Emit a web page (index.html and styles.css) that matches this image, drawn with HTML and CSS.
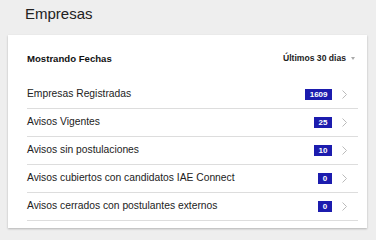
FILE: index.html
```html
<!DOCTYPE html>
<html lang="es">
<head>
<meta charset="utf-8">
<title>Empresas</title>
<link rel="stylesheet" href="styles.css">
</head>
<body>
  <h1 class="page-title">Empresas</h1>
  <section class="card">
    <header class="card-header">
      <span class="card-heading">Mostrando Fechas</span>
      <span class="range">Últimos 30 dias<span class="caret"></span></span>
    </header>
    <ul class="stats">
      <li class="stat">
        <span class="stat-label">Empresas Registradas</span>
        <span class="stat-end"><span class="badge">1609</span><svg class="chev" viewBox="0 0 5 9" width="5" height="9"><polyline points="0.5,0.5 4.5,4.5 0.5,8.5"/></svg></span>
      </li>
      <li class="stat">
        <span class="stat-label">Avisos Vigentes</span>
        <span class="stat-end"><span class="badge">25</span><svg class="chev" viewBox="0 0 5 9" width="5" height="9"><polyline points="0.5,0.5 4.5,4.5 0.5,8.5"/></svg></span>
      </li>
      <li class="stat">
        <span class="stat-label">Avisos sin postulaciones</span>
        <span class="stat-end"><span class="badge">10</span><svg class="chev" viewBox="0 0 5 9" width="5" height="9"><polyline points="0.5,0.5 4.5,4.5 0.5,8.5"/></svg></span>
      </li>
      <li class="stat">
        <span class="stat-label">Avisos cubiertos con candidatos IAE Connect</span>
        <span class="stat-end"><span class="badge">0</span><svg class="chev" viewBox="0 0 5 9" width="5" height="9"><polyline points="0.5,0.5 4.5,4.5 0.5,8.5"/></svg></span>
      </li>
      <li class="stat">
        <span class="stat-label">Avisos cerrados con postulantes externos</span>
        <span class="stat-end"><span class="badge">0</span><svg class="chev" viewBox="0 0 5 9" width="5" height="9"><polyline points="0.5,0.5 4.5,4.5 0.5,8.5"/></svg></span>
      </li>
    </ul>
  </section>
</body>
</html>
```

FILE: styles.css
```css
html, body {
  margin: 0;
  padding: 0;
}
body {
  background: #eeeeee;
  font-family: "Liberation Sans", Arial, sans-serif;
  color: #222;
  width: 376px;
  height: 237px;
  overflow: hidden;
}
.page-title {
  margin: 0;
  height: 35px;
  padding-left: 25px;
  font-size: 15px;
  font-weight: normal;
  line-height: 28px;
  color: #222;
}
.card {
  margin: 0 9px 0 8px;
  background: #fff;
  padding: 0 9px 7px 19px;
  box-shadow: 0 1px 2px rgba(0, 0, 0, 0.25);
}
.card-header {
  height: 46px;
  display: flex;
  align-items: center;
  justify-content: space-between;
}
.card-heading {
  font-size: 9.6px;
  font-weight: bold;
  color: #111;
}
.range {
  display: flex;
  align-items: center;
  font-size: 8.6px;
  font-weight: bold;
  color: #222;
  padding-right: 3px;
}
.caret {
  width: 0;
  height: 0;
  margin-left: 5px;
  border-left: 2.5px solid transparent;
  border-right: 2.5px solid transparent;
  border-top: 3px solid #aaa;
}
.stats {
  list-style: none;
  margin: 0;
  padding: 0;
}
.stat {
  height: 27px;
  border-bottom: 1px solid #dddddd;
  display: flex;
  align-items: center;
  justify-content: space-between;
}
.stat-label {
  font-size: 10.3px;
  color: #222;
  padding-bottom: 2px;
}
.stat-end {
  display: flex;
  align-items: center;
  padding-right: 11px;
}
.badge {
  height: 11px;
  min-width: 14px;
  box-sizing: border-box;
  padding: 0 4.5px;
  background: #1c1cae;
  color: #fff;
  font-size: 8px;
  font-weight: bold;
  line-height: 11px;
  text-align: center;
}
.chev {
  margin-left: 10px;
  fill: none;
  stroke: #bbbbbb;
  stroke-width: 1;
}
```
